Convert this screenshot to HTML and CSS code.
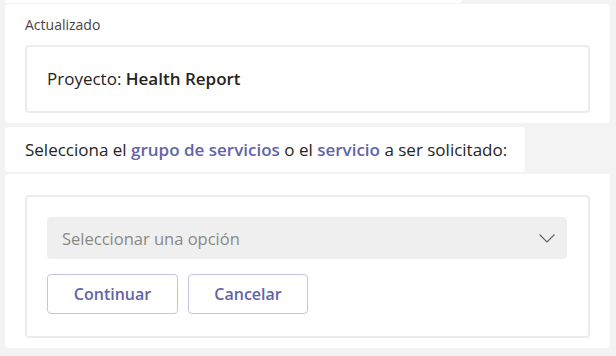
FILE: index.html
```html
<!DOCTYPE html>
<html>
<head>
  <title>Solicitud de servicio</title>
  <link rel="stylesheet" href="styles.css">
</head>
<body>
<div class="chat">
  <div class="bubble bubble-prev"></div>

  <div class="card card-project">
    <div class="card-caption">Actualizado</div>
    <div class="inner-box project-box">
      <span>Proyecto: <strong>Health Report</strong></span>
    </div>
  </div>

  <div class="bubble bubble-question">
    <span>Selecciona el <span class="hl">grupo de servicios</span> o el <span class="hl">servicio</span> a ser solicitado:</span>
  </div>

  <div class="card card-form">
    <div class="inner-box form-box">
      <div class="dropdown">
        <span class="dropdown-placeholder">Seleccionar una opción</span>
        <svg class="dropdown-chevron" width="16" height="9" viewBox="0 0 16 9">
          <path d="M0.5 0.5 L8 8 L15.5 0.5" fill="none" stroke="#616161" stroke-width="1.1" />
        </svg>
      </div>
      <div class="actions">
        <button class="btn btn-continue">Continuar</button>
        <button class="btn btn-cancel">Cancelar</button>
      </div>
    </div>
  </div>
</div>
</body>
</html>
```

FILE: styles.css
```css
html, body {
  margin: 0;
  padding: 0;
  width: 100%;
  height: 100%;
  box-sizing: border-box;
}

body {
  background-color: #f3f3f3;
  font-family: "Open Sans", "Noto Sans", sans-serif;
  color: #252423;
  overflow: hidden;
}

.chat {
  display: flex;
  flex-direction: column;
  align-items: flex-start;
  padding-left: 5px;
}

.bubble, .card {
  background-color: #fff;
  border-radius: 4px;
  box-sizing: border-box;
}

.bubble-prev {
  width: 457px;
  height: 3px;
  border-radius: 0 0 4px 4px;
}

.card {
  width: 605px;
  padding: 0 20px 10px 20px;
}

.card-project {
  margin-top: 1px;
  height: 119px;
}

.card-caption {
  font-size: 14px;
  color: #484644;
  height: 41px;
  line-height: 18px;
  padding-top: 12px;
  box-sizing: border-box;
}

.inner-box {
  border: 2px solid #ececec;
  border-radius: 4px;
  box-sizing: border-box;
}

.project-box {
  height: 68px;
  display: flex;
  align-items: center;
  padding: 0 20px;
  font-size: 17px;
  line-height: 22px;
}

.project-box strong {
  font-weight: 600;
}

.bubble-question {
  margin-top: 4px;
  width: 520px;
  height: 45px;
  display: flex;
  align-items: center;
  padding: 0 20px;
  font-size: 17px;
  line-height: 22px;
  white-space: nowrap;
}

.hl {
  color: #6264a7;
  font-weight: 600;
}

.card-form {
  margin-top: 2px;
  height: 174px;
  padding-top: 21px;
}

.form-box {
  height: 143px;
  padding: 20px 21px 20px 20px;
  display: flex;
  flex-direction: column;
  gap: 15px;
}

.dropdown {
  height: 42px;
  background-color: #efefef;
  border-radius: 4px;
  display: flex;
  align-items: center;
  justify-content: space-between;
  padding: 0 12px 0 15px;
}

.dropdown-placeholder {
  font-size: 16.5px;
  color: #8a8886;
}

.actions {
  display: flex;
  gap: 10px;
}

.btn {
  height: 40px;
  background-color: #fff;
  border: 1px solid #c5c4e3;
  border-radius: 4px;
  font-family: inherit;
  font-size: 16px;
  font-weight: 600;
  color: #6264a7;
  padding: 0;
}

.btn-continue {
  width: 131px;
}

.btn-cancel {
  width: 120px;
}
```
